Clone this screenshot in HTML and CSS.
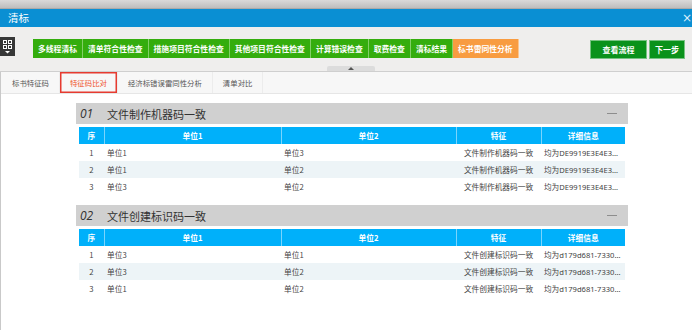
FILE: index.html
```html
<!DOCTYPE html>
<html lang="zh">
<head>
<meta charset="utf-8">
<title>清标</title>
<link rel="stylesheet" href="styles.css">
</head>
<body>
<div class="window">
  <div class="top-strip"></div>
  <div class="titlebar"><span class="title">清标</span><span class="close">×</span></div>
  <div class="toolbar">
    <div class="toolbar-row">
      <div class="grid-btn">
        <svg width="15" height="19" viewBox="0 0 15 19">
          <rect x="3.5" y="3.5" width="3" height="3" fill="none" stroke="#fff" stroke-width="1"/>
          <rect x="8.5" y="3.5" width="3" height="3" fill="none" stroke="#fff" stroke-width="1"/>
          <rect x="3.5" y="8.5" width="3" height="3" fill="none" stroke="#fff" stroke-width="1"/>
          <rect x="8.5" y="8.5" width="3" height="3" fill="none" stroke="#fff" stroke-width="1"/>
          <path d="M5 14 L10 14 L7.5 16.5 Z" fill="#fff"/>
        </svg>
      </div>
      <div class="steps">
        <span class="step">多线程清标</span>
        <span class="step">清单符合性检查</span>
        <span class="step">措施项目符合性检查</span>
        <span class="step">其他项目符合性检查</span>
        <span class="step">计算错误检查</span>
        <span class="step">取费检查</span>
        <span class="step">清标结果</span>
        <span class="step orange">标书雷同性分析</span>
      </div>
      <div class="actions">
        <span class="act wide">查看流程</span>
        <span class="act">下一步</span>
      </div>
    </div>
    <div class="handle-row">
      <span class="handle">
        <svg width="8" height="5" viewBox="0 0 8 5"><path d="M1 4 L7 4 L4 1 Z" fill="#555"/></svg>
      </span>
    </div>
  </div>
  <div class="main">
    <div class="tabs">
      <span class="tab">标书特征码</span>
      <span class="tab active">特征码比对</span>
      <span class="tab">经济标错误雷同性分析</span>
      <span class="tab">清单对比</span>
    </div>
    <div class="content">
      <section class="group">
        <div class="group-head"><span class="num">01</span><span class="gtitle">文件制作机器码一致</span><span class="minus"></span></div>
        <table class="grid">
          <colgroup><col class="c-no"><col class="c-u1"><col class="c-u2"><col class="c-feat"><col class="c-det"></colgroup>
          <thead><tr><th>序</th><th>单位1</th><th>单位2</th><th>特征</th><th>详细信息</th></tr></thead>
          <tbody>
            <tr><td class="no">1</td><td>单位1</td><td>单位3</td><td class="feat">文件制作机器码一致</td><td class="det">均为DE9919E3E4E3A7C28F0B</td></tr>
            <tr><td class="no">2</td><td>单位1</td><td>单位2</td><td class="feat">文件制作机器码一致</td><td class="det">均为DE9919E3E4E3A7C28F0B</td></tr>
            <tr><td class="no">3</td><td>单位3</td><td>单位2</td><td class="feat">文件制作机器码一致</td><td class="det">均为DE9919E3E4E3A7C28F0B</td></tr>
          </tbody>
        </table>
      </section>
      <section class="group">
        <div class="group-head"><span class="num">02</span><span class="gtitle">文件创建标识码一致</span><span class="minus"></span></div>
        <table class="grid">
          <colgroup><col class="c-no"><col class="c-u1"><col class="c-u2"><col class="c-feat"><col class="c-det"></colgroup>
          <thead><tr><th>序</th><th>单位1</th><th>单位2</th><th>特征</th><th>详细信息</th></tr></thead>
          <tbody>
            <tr><td class="no">1</td><td>单位3</td><td>单位1</td><td class="feat">文件创建标识码一致</td><td class="det">均为d179d681-7330-4b2e-9c1a</td></tr>
            <tr><td class="no">2</td><td>单位3</td><td>单位2</td><td class="feat">文件创建标识码一致</td><td class="det">均为d179d681-7330-4b2e-9c1a</td></tr>
            <tr><td class="no">3</td><td>单位1</td><td>单位2</td><td class="feat">文件创建标识码一致</td><td class="det">均为d179d681-7330-4b2e-9c1a</td></tr>
          </tbody>
        </table>
      </section>
    </div>
  </div>
</div>
</body>
</html>
```

FILE: styles.css
```css
* { box-sizing: border-box; }
html, body { margin: 0; padding: 0; }
body {
  width: 692px;
  height: 330px;
  overflow: hidden;
  background: #fff;
  font-family: "Noto Sans CJK SC", "Noto Sans", sans-serif;
  color: #333;
}
.window {
  display: flex;
  flex-direction: column;
  height: 330px;
}
.top-strip {
  height: 9px;
  background: linear-gradient(#d9d9d9, #bdbdbd);
  border-bottom: 1px solid #a9a9a9;
}
.titlebar {
  height: 18px;
  background: #0a8fd3;
  color: #fff;
  display: flex;
  align-items: center;
  justify-content: space-between;
  padding-left: 8px;
  overflow: hidden;
}
.title { font-size: 10.5px; line-height: 18px; }
.close { font-size: 12px; line-height: 18px; margin-right: 0; color: #dff1fb; font-family: "DejaVu Sans", sans-serif; }

.toolbar {
  background: #efeeed;
  padding-top: 10px;
  border-bottom: 1px solid #cfcfcf;
}
.toolbar-row {
  display: flex;
  align-items: flex-start;
  height: 21px;
}
.grid-btn {
  width: 15px;
  height: 19px;
  background: #373737;
  margin-right: 18px;
}
.grid-btn svg { display: block; }
.steps {
  display: flex;
  margin-top: 2px;
}
.step {
  height: 19px;
  line-height: 19px;
  padding: 0 5px;
  background: #34ad0d;
  color: #fff;
  font-weight: bold;
  font-size: 7.8px;
  border-right: 1px solid #82cf67;
  white-space: nowrap;
}
.step.orange { background: #f89c41; border-right: 1px solid #fbc58f; }
.actions {
  margin-left: auto;
  margin-right: 7px;
  margin-top: 3px;
  display: flex;
  gap: 2px;
}
.act {
  height: 19px;
  line-height: 17px;
  padding: 0 5px;
  background: #0a921b;
  border: 1px solid #78c382;
  color: #fff;
  font-weight: bold;
  font-size: 8px;
  white-space: nowrap;
}
.act.wide { padding: 0 11.5px; }
.handle-row {
  display: flex;
  justify-content: center;
  padding-left: 10px;
  margin-top: 8px;
}
.handle {
  width: 48px;
  height: 5px;
  background: #dcdcdc;
  border-radius: 2px 2px 0 0;
  display: flex;
  justify-content: center;
}
.handle svg { display: block; }

.main {
  flex: 1;
  border-left: 1px solid #c9c9c9;
}
.tabs {
  display: flex;
  height: 22px;
  background: #f7f7f7;
  border-bottom: 1px solid #e6e6e6;
  padding-left: 1px;
}
.tab {
  padding: 0 10px;
  line-height: 21px;
  height: 21px;
  font-size: 7.4px;
  color: #555;
  border-right: 1px solid #ececec;
  white-space: nowrap;
}
.tab.active {
  color: #f0542d;
  box-shadow: inset 0 0 0 1.5px #e63b30;
}

.content {
  padding: 9px 0 0 75px;
}
.group {
  width: 552px;
  margin-bottom: 10px;
}
.group-head {
  height: 21px;
  background: #d0d0d0;
  display: flex;
  align-items: center;
  padding: 0 11px 0 4px;
}
.num {
  width: 27px;
  font-family: "Open Sans", "Liberation Sans", sans-serif;
  font-style: italic;
  font-size: 12px;
  color: #333;
}
.gtitle {
  font-size: 11px;
  color: #333;
}
.minus {
  margin-left: auto;
  width: 10px;
  height: 1px;
  background: #8d8d8d;
}
.grid {
  margin: 3px 3px 0;
  width: 546px;
  border-collapse: collapse;
  table-layout: fixed;
  font-size: 7.7px;
}
.c-no { width: 25px; }
.c-u1 { width: 177px; }
.c-u2 { width: 175px; }
.c-feat { width: 85px; }
.c-det { width: 84px; }
.grid th {
  height: 17px;
  padding: 0;
  background: #00b0fa;
  color: #fff;
  font-weight: bold;
  text-align: center;
  border-left: 1px solid #7ad4fc;
}
.grid th:first-child { border-left: none; }
.grid td {
  height: 17px;
  padding: 0 3px;
  color: #444;
  white-space: nowrap;
  overflow: hidden;
  text-overflow: ellipsis;
}
.grid td.det {
  font-family: "Noto Sans", "Noto Sans CJK SC", sans-serif;
  font-size: 7.6px;
  padding-right: 4px;
}
.grid tbody tr:nth-child(even) td { background: #edf4f7; }
.grid td.no { text-align: center; padding: 0; }
.grid td.feat { text-align: center; padding: 0; }
```
